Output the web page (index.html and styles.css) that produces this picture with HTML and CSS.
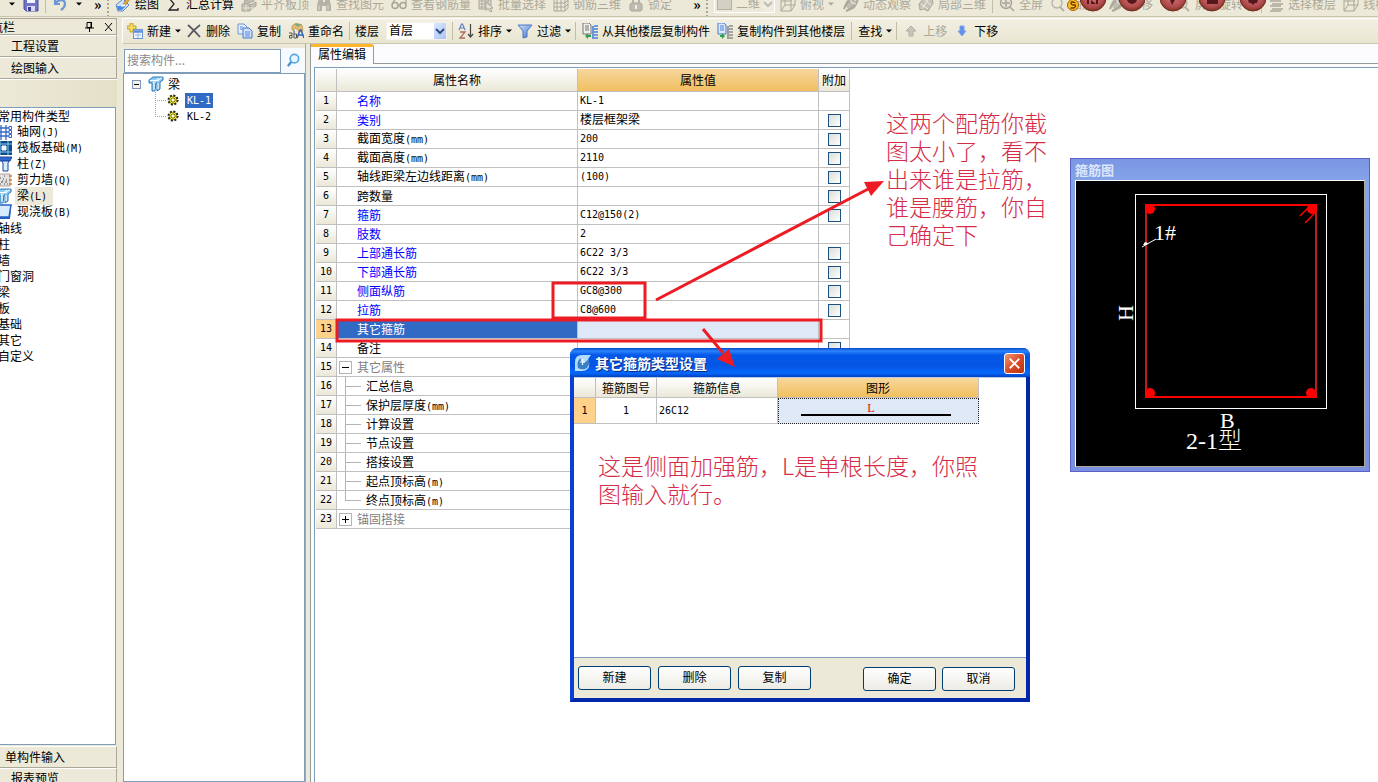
FILE: index.html
```html
<!DOCTYPE html>
<html lang="zh-CN">
<head>
<meta charset="utf-8">
<title>属性编辑</title>
<link rel="stylesheet" href="styles.css">
</head>
<body>
<svg class="defs" aria-hidden="true">
  <defs>
    <linearGradient id="blue" x1="0" y1="0" x2="1" y2="1"><stop offset="0" stop-color="#cfe2ff"/><stop offset="1" stop-color="#3f6fc8"/></linearGradient>
    <radialGradient id="ball" cx=".5" cy=".4" r=".6"><stop offset="0" stop-color="#d98080"/><stop offset=".75" stop-color="#b04a4c"/><stop offset="1" stop-color="#7c3222"/></radialGradient>
    <symbol id="i-save" viewBox="0 0 16 16"><path d="M1 1h14v14H3l-2-2z" fill="#6f74c8" stroke="#4b4f9c"/><path d="M4 1h8v6H4z" fill="#f4f6ff"/><path d="M4 10h8v5H4z" fill="#d8dcf4"/><path d="M5 11h3v4H5z" fill="#3d4190"/></symbol>
    <symbol id="i-undo" viewBox="0 0 16 16"><path d="M3 3v5h5M3.500 7.500C6 3 13 3 13 8c0 3-2 4.500-4 6" fill="none" stroke="#6c96d8" stroke-width="2.200"/></symbol>
    <symbol id="i-draw" viewBox="0 0 16 16"><path d="M1 9l7-6 6 6-6 6H3z" fill="#cfe2fa" stroke="#5c86c4"/><path d="M2 10h9l-4 4H3z" fill="#4c8ae0"/><path d="M8 8L13 1l2 2-5 7z" fill="#e0a838" stroke="#8a6a30" stroke-width=".6"/><path d="M6 11l3-3 2 2z" fill="#fff"/></symbol>
    <symbol id="i-sigma" viewBox="0 0 16 16"><path d="M12 4V2H3l5 6-5 6h9v-2" fill="none" stroke="#222" stroke-width="1.300"/></symbol>
    <symbol id="i-slab" viewBox="0 0 16 16"><path d="M1 8h8v7H1zM3 5l10-3v3L4 8zM9 9l6-3v4l-6 4z" fill="#c4c1b4" stroke="#aaa79a"/><path d="M2 12h12M5 8v7" stroke="#e8e5d8"/></symbol>
    <symbol id="i-bino" viewBox="0 0 16 16"><path d="M3 2h4v4h2V2h4l2 7v6h-5v-5H6v5H1V9z" fill="#b4b1a6"/><path d="M3 9v5M12 9v5" stroke="#dddacf"/></symbol>
    <symbol id="i-glass" viewBox="0 0 16 16"><circle cx="4" cy="9.500" r="3" fill="none" stroke="#aaa79a" stroke-width="1.500"/><circle cx="12" cy="9.500" r="3" fill="none" stroke="#aaa79a" stroke-width="1.500"/><path d="M1 8l4-6M15 8V3l-3-1M7 9h2" fill="none" stroke="#aaa79a" stroke-width="1.300"/></symbol>
    <symbol id="i-batch" viewBox="0 0 16 16"><path d="M1 2h12v11H1zM1 5h12M1 8h12M1 11h12M4 2v11M7 2v11M10 2v11" fill="none" stroke="#aaa79a"/><path d="M8 6l7 6-3 .5 2 3h-2l-2-3-2 2z" fill="#e6e3d6" stroke="#aaa79a"/></symbol>
    <symbol id="i-grid3" viewBox="0 0 16 16"><path d="M1 3l4-2h10v11l-3 3H1zM1 7h11l3-3M1 11h11l3-3M4 3v12M8 2v13M12 3v12M1 3h11l3-2" fill="none" stroke="#aaa79a"/></symbol>
    <symbol id="i-lock" viewBox="0 0 16 16"><path d="M5 8V4q3-4 6 0v4" fill="none" stroke="#aaa79a" stroke-width="1.600"/><rect x="2" y="7" width="12" height="8" rx="2" fill="#bfbcb0" stroke="#aaa79a"/><path d="M8 9v4" stroke="#eee" stroke-width="2"/></symbol>
    <symbol id="i-cube" viewBox="0 0 16 16"><path d="M1 4l4-3h10v8l-4 6H1zM1 5h10v10M11 5l4-4M5 1v8H15M5 9l-4 6" fill="none" stroke="#aaa79a"/></symbol>
    <symbol id="i-orbit" viewBox="0 0 16 16"><circle cx="8" cy="8" r="5.500" fill="#bfbcb0"/><path d="M1 13Q4 3 15 2q-1 9-12 13" fill="none" stroke="#aaa79a" stroke-width="2"/><path d="M7 3l2 4 4 1" stroke="#eee" fill="none"/></symbol>
    <symbol id="i-part" viewBox="0 0 16 16"><path d="M1 8l5-6 4 2 4-2 1 5-5 8-4-2-4 1z" fill="#c8c5b8" stroke="#aaa79a"/><path d="M3 8l7 5M6 3l7 6M10 4l-6 9" stroke="#eeebdf"/></symbol>
    <symbol id="i-full" viewBox="0 0 16 16"><circle cx="7" cy="7" r="5.500" fill="#e6e3d6" stroke="#aaa79a" stroke-width="1.500"/><path d="M11 11l4 4M7 3v8M3 7h8" stroke="#aaa79a" stroke-width="1.500"/></symbol>
    <symbol id="i-zoomg" viewBox="0 0 16 16"><circle cx="7" cy="7" r="5" fill="none" stroke="#b4b1a6" stroke-width="1.300"/><path d="M10 11l4 4" stroke="#b4b1a6" stroke-width="2"/></symbol>
    <symbol id="i-floors" viewBox="0 0 16 16"><path d="M4 3h11M2 5h11M4 8h11M2 10h11M4 13h11M2 15h11" stroke="#aaa79a" stroke-width="1.500"/></symbol>
    <symbol id="i-new" viewBox="0 0 16 16"><path d="M3 0h3v3h3v3H6v3H3V6H0V3h3z" fill="#f8dc60" stroke="#b89020" stroke-width=".8"/><rect x="6.500" y="6.500" width="9" height="9" fill="#eef5ff" stroke="#6c96d0"/><path d="M7 8.500h8" stroke="#5a8ee0" stroke-width="2.500"/><path d="M8 12h6M11 10v5" stroke="#9ab8e4"/></symbol>
    <symbol id="i-del" viewBox="0 0 16 16"><path d="M2 2q6 5 12 12M14 2Q7 7 2 14" fill="none" stroke="#5a5a60" stroke-width="1.800"/></symbol>
    <symbol id="i-copy" viewBox="0 0 16 16"><path d="M1 1h6l3 3v7H1z" fill="#e4efff" stroke="#6c96d8"/><path d="M6 5h6l3 3v7H6z" fill="#cfe0fc" stroke="#4a78c8"/><path d="M8 9h5M8 11h5M8 13h5M3 4h3M3 6h3" stroke="#5a8ad8"/></symbol>
    <symbol id="i-rename" viewBox="0 0 16 16"><path d="M4 3l4-3 6 2 1 6-4 1-3-4-4 2z" fill="#e3bd72" stroke="#a88038" stroke-width=".6"/><path d="M6 1h8l-4 3z" fill="#80a880"/><path d="M9 15l3-8h1l3 8M10 12h5" fill="none" stroke="#3464c0" stroke-width="1.500"/><path d="M1 10h3v5H1.500v-2.500H4M6 7v8M6 11h2.500v4H6" fill="none" stroke="#555"/></symbol>
    <symbol id="i-sort" viewBox="0 0 16 16"><path d="M1 7l2.500-6h1L7 7M2 5h4" fill="none" stroke="#5a82c4" stroke-width="1.200"/><path d="M2 9h5l-5 6h5" fill="none" stroke="#b06a60" stroke-width="1.300"/><path d="M12.500 1v12M10 11l2.500 3 2.500-3" fill="none" stroke="#444" stroke-width="1.200"/></symbol>
    <symbol id="i-funnel" viewBox="0 0 16 16"><path d="M1 2h14l-5 6v6l-4 1V8z" fill="url(#blue)" stroke="#4878c4"/></symbol>
    <symbol id="i-from" viewBox="0 0 16 16"><path d="M1 0h6l2 2v9H1z" fill="#f0f0ee" stroke="#777"/><path d="M3 3h4M3 5h4M3 7h4" stroke="#777"/><path d="M11 3v13M12 3h4M12 6h4M12 9h4M12 12h4M12 15h4" stroke="#4a80d8" stroke-width="1.600"/><path d="M3 13l3-3v2h3v2H6v2z" fill="#30a050"/></symbol>
    <symbol id="i-to" viewBox="0 0 16 16"><path d="M1 0h6l2 2v9H1z" fill="#dce9ff" stroke="#4a78c8"/><path d="M3 3h4M3 5h4M3 7h4" stroke="#4a80d8"/><path d="M11 3v13M12 3h4M12 6h4M12 9h4M12 12h4M12 15h4" stroke="#8c8c90" stroke-width="1.600"/><path d="M8 13l-3-3v2H3v2h2v2z" fill="#30a050"/></symbol>
    <symbol id="i-up" viewBox="0 0 16 16"><path d="M8 3l5 5h-3v5H6V8H3z" fill="#c8c5ba" stroke="#b0ada0"/></symbol>
    <symbol id="i-down" viewBox="0 0 16 16"><path d="M8 13l4-5h-2V3H6v5H4z" fill="#5e90ea" stroke="#7aa2ea"/></symbol>
    <symbol id="i-beam" viewBox="0 0 16 16"><path d="M1 4l4-3h10v3l-3 2v7l-3 2V7H8L7 15H4V7H1z" fill="#8ccaf2" stroke="#2878b8"/><path d="M2 4.500h8l4-3M5 7l6-5M10 7v6M6 7v7" stroke="#fff" fill="none"/></symbol>
    <symbol id="i-gear" viewBox="0 0 12 12"><circle cx="6" cy="6" r="4.500" fill="#e8dc28" stroke="#222" stroke-width="2" stroke-dasharray="2 1.500"/><circle cx="6" cy="6" r="3.300" fill="#f4ec40"/><path d="M6 2v8M2 6h8M3.500 3.500l5 5M8.500 3.500l-5 5" stroke="#555510" stroke-width=".8"/><circle cx="6" cy="6" r="1.200" fill="#fff"/></symbol>
    <symbol id="i-axis" viewBox="0 0 16 16"><path d="M0 4h13M0 8h13M0 12h13M5 1v15M10 1v15" stroke="#3568c8" stroke-width="1.300"/><path d="M13 2.500h2.500v3H13zM13 6.500h2.500v3H13zM13 10.500h2.500v3H13z" fill="#fff" stroke="#3568c8"/></symbol>
    <symbol id="i-raft" viewBox="0 0 16 16"><path d="M0 1h16v14H0z" fill="#0d4c8c"/><path d="M0 4h16M0 12h16M4 1v14M12 1v14" stroke="#8cc8f0"/><path d="M6 6h4v4H6z" fill="#e4f4ff" stroke="#fff"/></symbol>
    <symbol id="i-col" viewBox="0 0 16 16"><path d="M0 3l2-2h14l-2 4H0z" fill="#2e66cc" stroke="#1a48a0"/><path d="M6 5h7l-1 2v8H7V7z" fill="#d8ecff" stroke="#1a48a0"/></symbol>
    <symbol id="i-wall" viewBox="0 0 16 16"><path d="M0 2h14v12H0z" fill="#e2e2e2" stroke="#b8a090"/><path d="M4 6h1M8 4h1M6 9h1M10 8h1M8 12h1M4 12h1M11 12h1M7 7h1M5 10h2M9 10h2" stroke="#555"/><path d="M13 4h3M13 8h3M13 12h3" stroke="#d87828" stroke-width="1.500"/></symbol>
    <symbol id="i-plate" viewBox="0 0 16 16"><path d="M2 1h13l-2 12H0z" fill="#d8ecff" stroke="#2460c4" stroke-width="1.500"/><path d="M0 13h13l2-12v3l-1 11H0z" fill="#2460c4"/></symbol>
  </defs>
</svg>

<header class="toolbar toolbar-top">
  <div class="tools tools-file">
    <i class="arrow"></i>
    <button class="tool" aria-label="保存"><svg class="icon"><use href="#i-save"/></svg></button>
    <i class="sep"></i>
    <button class="tool" aria-label="撤销"><svg class="icon"><use href="#i-undo"/></svg></button>
    <i class="arrow"></i><span class="more">»</span>
  </div>
  <i class="grip"></i>
  <div class="tools tools-draw">
    <button class="tool"><svg class="icon"><use href="#i-draw"/></svg>绘图</button>
    <button class="tool"><svg class="icon"><use href="#i-sigma"/></svg>汇总计算</button>
    <button class="tool" disabled><svg class="icon"><use href="#i-slab"/></svg>平齐板顶</button>
    <button class="tool" disabled><svg class="icon"><use href="#i-bino"/></svg>查找图元</button>
    <button class="tool" disabled><svg class="icon"><use href="#i-glass"/></svg>查看钢筋量</button>
    <button class="tool" disabled><svg class="icon"><use href="#i-batch"/></svg>批量选择</button>
    <button class="tool" disabled><svg class="icon"><use href="#i-grid3"/></svg>钢筋三维</button>
    <button class="tool" disabled><svg class="icon"><use href="#i-lock"/></svg>锁定</button>
    <span class="more">»</span>
  </div>
  <i class="grip"></i>
  <div class="tools tools-view">
    <span class="combo combo-view"><select disabled aria-label="视图"><option>二维</option></select><i class="swatch"></i><svg viewBox="0 0 12 16"><path d="M2 6l4 4 4-4" /></svg></span>
    <button class="tool spaced" disabled><svg class="icon"><use href="#i-cube"/></svg>俯视<i class="arrow"></i></button>
    <button class="tool" disabled><svg class="icon"><use href="#i-orbit"/></svg>动态观察</button>
    <button class="tool" disabled><svg class="icon"><use href="#i-part"/></svg>局部三维</button>
    <i class="sep"></i>
    <button class="tool" disabled><svg class="icon"><use href="#i-full"/></svg>全屏</button>
    <button class="tool" disabled><svg class="icon"><use href="#i-zoomg"/></svg>缩放<i class="arrow"></i></button>
    <button class="tool" disabled><svg class="icon"><use href="#i-orbit"/></svg>平移</button>
    <i class="arrow"></i>
    <button class="tool spaced" disabled><svg class="icon"><use href="#i-zoomg"/></svg>屏幕旋转<i class="arrow"></i></button>
    <i class="sep"></i>
    <button class="tool" disabled><svg class="icon"><use href="#i-floors"/></svg>选择楼层</button>
    <button class="tool" disabled><svg class="icon"><use href="#i-cube"/></svg>线框</button>
  </div>
  <svg class="balls" viewBox="0 0 210 18" aria-hidden="true">
    <g fill="url(#ball)" stroke="#70301c"><circle cx="31" cy="-2" r="13"/><circle cx="70" cy="-2" r="13"/><circle cx="111" cy="-2" r="13"/><circle cx="150" cy="-2" r="13"/><circle cx="191" cy="-2" r="13"/></g>
    <g fill="#54171c"><path d="M25 0h2v4h-2zM29 4V0l5 4V0h2v4"/><circle cx="70" cy="-1" r="5"/><path d="M108 0h5l-3 5z"/><path d="M145 0h11v4h-11z"/><path d="M186 0h10l-1 3h-2l-2 2-2-2h-2z"/></g>
    <circle cx="11" cy="5" r="5.500" fill="#ffc51c" stroke="#a85a08"/><path d="M13.500 3q-4-2-4.500 0t3 2 0 3H8.500" fill="none" stroke="#6a3000" stroke-width="1.300"/>
  </svg>
</header>

<div class="workspace">
  <aside class="nav">
    <div class="nav-title"><span>模块导航栏</span>
      <svg viewBox="0 0 9 10"><path d="M2 .5h4v5H2zM6.500 0v6M0 6h9M4.500 6v4" fill="none" stroke="#000"/></svg>
      <svg viewBox="0 0 9 10"><path d="M1 1l7 8M8 1L1 9" fill="none" stroke="#000"/></svg>
    </div>
    <button class="nav-tab">工程设置</button>
    <button class="nav-tab">绘图输入</button>
    <div class="nav-strip"></div>
    <ul class="nav-list">
      <li class="group">常用构件类型</li>
      <li><svg class="icon"><use href="#i-axis"/></svg><span>轴网<b>(J)</b></span></li>
      <li><svg class="icon"><use href="#i-raft"/></svg><span>筏板基础<b>(M)</b></span></li>
      <li><svg class="icon"><use href="#i-col"/></svg><span>柱<b>(Z)</b></span></li>
      <li><svg class="icon"><use href="#i-wall"/></svg><span>剪力墙<b>(Q)</b></span></li>
      <li class="current"><svg class="icon"><use href="#i-beam"/></svg><span>梁<b>(L)</b></span></li>
      <li><svg class="icon"><use href="#i-plate"/></svg><span>现浇板<b>(B)</b></span></li>
      <li class="group">轴线</li><li class="group">柱</li><li class="group">墙</li><li class="group">门窗洞</li><li class="group">梁</li><li class="group">板</li><li class="group">基础</li><li class="group">其它</li><li class="group">自定义</li>
    </ul>
    <button class="nav-tab nav-single">单构件输入</button>
    <button class="nav-tab nav-last">报表预览</button>
  </aside>

  <main class="main">
    <div class="toolbar toolbar-edit tools">
      <button class="tool"><svg class="icon"><use href="#i-new"/></svg>新建<i class="arrow"></i></button>
      <button class="tool"><svg class="icon"><use href="#i-del"/></svg>删除</button>
      <button class="tool"><svg class="icon"><use href="#i-copy"/></svg>复制</button>
      <button class="tool"><svg class="icon"><use href="#i-rename"/></svg>重命名</button>
      <i class="sep tight"></i>
      <label for="floor">楼层</label>
      <span class="combo"><select id="floor"><option>首层</option></select><svg viewBox="0 0 12 16"><path d="M2 6l4 4 4-4"/></svg></span>
      <i class="sep tight"></i>
      <button class="tool"><svg class="icon"><use href="#i-sort"/></svg>排序<i class="arrow"></i></button>
      <button class="tool"><svg class="icon"><use href="#i-funnel"/></svg>过滤<i class="arrow"></i></button>
      <i class="sep"></i>
      <button class="tool"><svg class="icon"><use href="#i-from"/></svg>从其他楼层复制构件</button>
      <button class="tool"><svg class="icon"><use href="#i-to"/></svg>复制构件到其他楼层</button>
      <i class="sep"></i>
      <button class="tool">查找<i class="arrow"></i></button>
      <i class="sep"></i>
      <button class="tool" disabled><svg class="icon"><use href="#i-up"/></svg>上移</button>
      <button class="tool"><svg class="icon"><use href="#i-down"/></svg>下移</button>
    </div>
    <div class="content">
      <section class="components">
        <div class="search"><input type="text" placeholder="搜索构件..." aria-label="搜索构件"><button aria-label="搜索"><svg viewBox="0 0 16 16"><circle cx="9" cy="6" r="4.500" fill="#e8f6ff" stroke="#5aa8e0" stroke-width="1.800"/><path d="M5.500 9.500L2 14" stroke="#4a90cc" stroke-width="2.500"/></svg></button></div>
        <div class="tree">
          <div class="branch"><i class="fold"></i><svg class="icon"><use href="#i-beam"/></svg>梁</div>
          <div class="leaf"><svg class="gear"><use href="#i-gear"/></svg><span class="selected">KL-1</span></div>
          <div class="leaf"><svg class="gear"><use href="#i-gear"/></svg><span>KL-2</span></div>
        </div>
      </section>
      <section class="props">
        <div class="tabs"><button class="tab">属性编辑</button></div>
        <div class="sheet">
          <table class="grid prop-grid">
            <colgroup><col class="c-num"><col class="c-name"><col class="c-value"><col class="c-add"></colgroup>
            <thead><tr><th></th><th>属性名称</th><th class="hot">属性值</th><th>附加</th></tr></thead>
            <tbody>
              <tr><th>1</th><td class="name link">名称</td><td class="val">KL-1</td><td></td></tr>
              <tr><th>2</th><td class="name link">类别</td><td class="val zh">楼层框架梁</td><td><input type="checkbox" aria-label="类别附加"></td></tr>
              <tr><th>3</th><td class="name">截面宽度<b>(mm)</b></td><td class="val">200</td><td><input type="checkbox" aria-label="截面宽度附加"></td></tr>
              <tr><th>4</th><td class="name">截面高度<b>(mm)</b></td><td class="val">2110</td><td><input type="checkbox" aria-label="截面高度附加"></td></tr>
              <tr><th>5</th><td class="name">轴线距梁左边线距离<b>(mm)</b></td><td class="val">(100)</td><td><input type="checkbox" aria-label="距离附加"></td></tr>
              <tr><th>6</th><td class="name">跨数量</td><td class="val"></td><td><input type="checkbox" aria-label="跨数量附加"></td></tr>
              <tr><th>7</th><td class="name link">箍筋</td><td class="val">C12@150(2)</td><td><input type="checkbox" aria-label="箍筋附加"></td></tr>
              <tr><th>8</th><td class="name link">肢数</td><td class="val">2</td><td></td></tr>
              <tr><th>9</th><td class="name link">上部通长筋</td><td class="val">6C22 3/3</td><td><input type="checkbox" aria-label="上部通长筋附加"></td></tr>
              <tr><th>10</th><td class="name link">下部通长筋</td><td class="val">6C22 3/3</td><td><input type="checkbox" aria-label="下部通长筋附加"></td></tr>
              <tr><th>11</th><td class="name link">侧面纵筋</td><td class="val">GC8@300</td><td><input type="checkbox" aria-label="侧面纵筋附加"></td></tr>
              <tr><th>12</th><td class="name link">拉筋</td><td class="val">C8@600</td><td><input type="checkbox" aria-label="拉筋附加"></td></tr>
              <tr class="active"><th>13</th><td class="name">其它箍筋</td><td class="val"></td><td></td></tr>
              <tr><th>14</th><td class="name">备注</td><td class="val"></td><td><input type="checkbox" aria-label="备注附加"></td></tr>
              <tr><th>15</th><td class="name head"><div><button class="toggle" aria-label="收起"></button>其它属性</div></td><td></td><td></td></tr>
              <tr><th>16</th><td class="name sub"><div>汇总信息</div></td><td></td><td></td></tr>
              <tr><th>17</th><td class="name sub"><div>保护层厚度<b>(mm)</b></div></td><td></td><td></td></tr>
              <tr><th>18</th><td class="name sub"><div>计算设置</div></td><td></td><td></td></tr>
              <tr><th>19</th><td class="name sub"><div>节点设置</div></td><td></td><td></td></tr>
              <tr><th>20</th><td class="name sub"><div>搭接设置</div></td><td></td><td></td></tr>
              <tr><th>21</th><td class="name sub"><div>起点顶标高<b>(m)</b></div></td><td></td><td></td></tr>
              <tr><th>22</th><td class="name sub end"><div>终点顶标高<b>(m)</b></div></td><td></td><td></td></tr>
              <tr><th>23</th><td class="name head"><div><button class="toggle plus" aria-label="展开"></button>锚固搭接</div></td><td></td><td></td></tr>
            </tbody>
          </table>
        </div>
      </section>
    </div>
  </main>
</div>

<section class="dialog" role="dialog" aria-label="其它箍筋类型设置">
  <div class="dialog-title">
    <svg class="logo" viewBox="0 0 16 16"><path d="M0 16V7q0-7 7-7h9L13 4q2 4 1 8-2 4-7 4z" fill="#b4dcfa"/><path d="M3 13Q1 6 6 3q-1 4 3 5l5-4q1 8-4 10-4 1-7-1z" fill="#3a80c8"/><path d="M5 7h5M7.500 4v6" stroke="#f0faff" fill="none" stroke-width="1.200"/></svg>
    <h2>其它箍筋类型设置</h2>
    <button class="close" aria-label="关闭"><svg viewBox="0 0 20 20"><path d="M5 5l10 10M15 5L5 15"/></svg></button>
  </div>
  <div class="dialog-body">
    <table class="grid stirrup-grid">
      <colgroup><col class="s-num"><col class="s-id"><col class="s-info"><col class="s-shape"></colgroup>
      <thead><tr><th></th><th>箍筋图号</th><th>箍筋信息</th><th class="hot">图形</th></tr></thead>
      <tbody><tr class="active"><th>1</th><td class="mid">1</td><td class="val">26C12</td><td class="shape"><div>L</div></td></tr></tbody>
    </table>
    <p class="note note-inner">这是侧面加强筋，L是单根长度，你照图输入就行。</p>
  </div>
  <div class="dialog-foot">
    <button>新建</button><button>删除</button><button>复制</button>
    <div class="confirm"><button>确定</button><button>取消</button></div>
  </div>
</section>

<p class="note note-outer">这两个配筋你截图太小了，看不出来谁是拉筋，谁是腰筋，你自己确定下</p>

<section class="preview">
  <h2>箍筋图</h2>
  <svg viewBox="1076 181 288 285">
    <rect x="1135.500" y="194.500" width="191" height="214" fill="none" stroke="#fff"/>
    <path d="M1146 205v192M1316 205v192" stroke="#c01c1c" stroke-width="2"/>
    <path d="M1145 205h172M1145 397h172" stroke="#f00" stroke-width="2"/>
    <g fill="#f00"><circle cx="1150" cy="209" r="5"/><circle cx="1312" cy="209" r="5"/><circle cx="1150" cy="393" r="5"/><circle cx="1311" cy="393" r="5"/></g>
    <path d="M1300 216l9-9M1305 223l10-10" stroke="#f00" stroke-width="1.500"/>
    <path d="M1142 247l14-8" stroke="#fff"/><path d="M1143 245l2-3 3 1-1 2z" fill="#fff"/>
    <g fill="#fff" class="cad"><text x="1154" y="240">1#</text><text x="1220" y="428">B</text><text x="1186" y="449" class="cad-name">2-1型</text><text transform="translate(1133 321) rotate(-90)">H</text></g>
  </svg>
</section>

<svg class="marks" aria-hidden="true">
  <g fill="none" stroke="#ed1c24" stroke-width="3"><rect x="553" y="283" width="92" height="35"/><rect x="337" y="320" width="484" height="21"/><path d="M656 300L872 187M703 329L723 353"/></g>
  <path d="M884 181l-13 15-7-14zM735 367l-18-8 12-10z" fill="#ed1c24"/>
</svg>
</body>
</html>
```

FILE: styles.css
```css
* { box-sizing: border-box; }
body {
  margin: 0; height: 100vh; overflow: hidden; position: relative;
  display: flex; flex-direction: column;
  background: #ece9d8; color: #000;
  font: 12px/16px "Noto Sans CJK SC", sans-serif;
}
button, input, select { font: inherit; color: inherit; }
button { border: 0; background: none; padding: 0; white-space: nowrap; }
h2, p, ul { margin: 0; padding: 0; }
b, .val, .mid, .leaf span, tbody th { font-family: "DejaVu Sans Mono", "Noto Sans CJK SC", monospace; font-size: 10px; font-weight: 400; }
.defs { position: absolute; width: 0; height: 0; }
.icon { width: 16px; height: 16px; flex: none; }

/* toolbars */
.toolbar { background: linear-gradient(#f2f0e4, #e8e5d0); }
.toolbar-top { position: relative; height: 17px; flex: none; display: flex; overflow: hidden; border-bottom: 1px solid #c9c5ae; background: #ece9d8; }
.toolbar-top .tools, .toolbar-top .grip { margin-top: -9px; height: 26px; flex: none; }
.tools { display: flex; align-items: center; gap: 7px; }
.tools-file { width: 107px; padding-left: 8px; }
.tools-draw { width: 597px; padding-left: 6px; }
.tools-draw .more { margin-left: 14px; }
.tools-view { padding-left: 6px; }
.grip { width: 2px; border-left: 2px dotted #a8a592; }
.tool { display: flex; align-items: center; gap: 4px; flex: none; }
.tool:disabled { color: #aca899; }
.spaced { margin-right: 4px; }
.arrow { border: 4px solid transparent; border-top-color: currentColor; border-bottom: 0; transform: scale(.75); flex: none; width: 8px; height: 4px; }
.tool .arrow { margin-left: -4px; transform: translateX(3px) scale(.75); }
.more { font-size: 14px; font-weight: 700; margin-left: 4px; }
.sep { width: 1px; height: 18px; margin: 0 -1px; background: #c2bea6; flex: none; }
.tight { margin: 0 -2px; }
.combo { position: relative; width: 61px; height: 18px; flex: none; }
.combo select { appearance: none; width: 100%; height: 18px; border: 1px solid #f4f2e8; background: #fff; padding: 0 0 2px 2px; border-radius: 0; outline: 0; line-height: 14px; display: block; }
.combo svg { position: absolute; right: 1px; top: 1px; width: 12px; height: 16px; background: linear-gradient(135deg, #dce8ff, #aac4f4); fill: none; stroke: #354c80; stroke-width: 2; pointer-events: none; }
.combo-view { margin-right: -2px; }
.combo-view select { background: #ece9d8; border-color: #fff; padding-left: 21px; color: #aca899; opacity: 1; }
.combo-view svg { background: #eeece0; stroke: #c0bdb0; }
.swatch { position: absolute; left: 3px; top: 2px; width: 15px; height: 13px; background: #d4d1c4; border: 1px solid #b4b1a6; }
.balls { position: absolute; left: 1062px; top: 0; width: 210px; height: 18px; }
.toolbar-edit { height: 26px; flex: none; padding: 0 4px 1px 4px; border-top: 1px solid #fff; border-bottom: 1px solid #c9c5ae; border-left: 1px solid #fff; margin-top: 1px; }

.workspace { flex: 1; min-height: 0; display: flex; gap: 5px; }
.main { flex: 1; min-width: 0; display: flex; flex-direction: column; }
.content { flex: 1; min-height: 0; display: flex; gap: 4px; }

/* left navigation */
.nav { width: 117px; flex: none; display: flex; flex-direction: column; overflow: hidden; padding-top: 1px; }
.nav-title { height: 17px; flex: none; border: 1px solid #aca899; border-left: 0; display: flex; align-items: center; gap: 10px; padding-right: 3px; }
.nav-title span { margin: 0 auto 0 -45px; }
.nav-title svg { width: 9px; height: 10px; }
.nav-tab { height: 22px; flex: none; text-align: left; padding-left: 11px; border-top: 1px solid #fff; border-bottom: 1px solid #aca899; border-right: 1px solid #aca899; }
.nav-strip { height: 28px; flex: none; border-top: 1px solid #fff; background: linear-gradient(90deg, #ece9d8, #e4e0c8); }
.nav-list { flex: 1; min-height: 0; list-style: none; background: #fff; border: 1px solid #7f9db9; border-left: 0; margin-right: 1px; }
.nav-list li { height: 16px; display: flex; align-items: center; }
.nav-list .icon { margin-left: -4px; margin-right: 3px; }
.nav-list span { padding: 0 6px 0 2px; }
.nav-list .group { margin-left: -2px; }
.current span { background: #ece9d8; }
.nav-single { padding-left: 5px; margin-top: 1px; }
.nav-last { height: 14px; line-height: 18px; overflow: hidden; border-bottom: 0; }

/* component tree */
.components { width: 184px; flex: none; display: flex; flex-direction: column; padding-top: 4px; border-right: 1px solid #aca899; }
.search { height: 25px; display: flex; padding-left: 2px; }
.search input { width: 157px; height: 24px; border: 1px solid #7f9db9; padding: 0 2px 4px; background: #fff; border-radius: 0; outline: 0; margin-top: 1px; }
.search input::placeholder { color: #8a8a8a; }
.search button { flex: 1; background: #f6f9fd; display: grid; place-items: center; }
.search button svg { width: 15px; height: 15px; }
.tree { flex: 1; background: #fff; border: 1px solid #7f9db9; margin-left: 1px; padding: 2px 0 0 8px; }
.branch { height: 16px; display: flex; align-items: center; gap: 4px; }
.branch .icon { margin-left: 3px; }
.fold { width: 9px; height: 9px; border: 1px solid #8094b4; background: linear-gradient(#000, #000) center / 5px 1px no-repeat #f4f2ea; }
.leaf { height: 16px; display: flex; align-items: center; margin-left: 23px; padding-left: 12px; background: repeating-linear-gradient(90deg, #a8a592 0 1px, transparent 1px 2px) 0 8px / 12px 1px no-repeat, repeating-linear-gradient(#a8a592 0 1px, transparent 1px 2px) 0 0 / 1px 16px no-repeat; }
.leaf:last-child { background-size: 12px 1px, 1px 8px; }
.gear { width: 12px; height: 12px; margin-right: 6px; }
.leaf span { padding: 0 2px; line-height: 15px; }
.leaf .selected { background: #316ac5; color: #fff; }

/* property sheet */
.props { flex: 1; min-width: 0; display: flex; flex-direction: column; border-left: 1px solid #919b9c; background: #fcfcfe; }
.tabs { height: 20px; flex: none; display: flex; }
.tabs::after { content: ""; flex: 1; border-bottom: 1px solid #919b9c; }
.tab { width: 63px; border-top: 3px solid #ffb52c; border-right: 1px solid #919b9c; border-radius: 0 3px 0 0; line-height: 14px; align-self: stretch; padding-bottom: 3px; }
.sheet { flex: 1; margin: 3px 0 0 3px; border: 1px solid #7f9db9; border-right: 0; border-bottom: 0; background: #fff; padding: 1px; }
.grid { border-collapse: separate; border-spacing: 0; table-layout: fixed; }
.grid th, .grid td { border-right: 1px solid #c0c0c0; border-bottom: 1px solid #c0c0c0; padding: 0; height: 19px; line-height: 16px; font-weight: 400; overflow: hidden; white-space: nowrap; }
.grid th { background: linear-gradient(#fff, #ebe8d8); text-align: center; }
.grid thead .hot { background: linear-gradient(#f8d79c, #f0bf60); }
.grid .active th { background: #ffd28c; }
.prop-grid { width: 534px; }
.prop-grid thead th { height: 23px; }
.c-num { width: 21px; } .c-name, .c-value { width: 241px; } .c-add { width: 31px; }
.grid td.name { padding-left: 20px; }
.grid td.val { padding-left: 2px; }
.grid td.zh { font-size: 12px; }
.link { color: #00f; }
.prop-grid td:last-child { text-align: center; }
.grid input { appearance: none; width: 13px; height: 13px; border: 1px solid #1c5180; background: linear-gradient(135deg, #dcdcd7, #fff); margin: 2px 0 0; display: inline-block; vertical-align: top; }
.active .name { background: #316ac5; color: #fff; }
.active .name + .val { background: #dfe8f6; }
.grid td.head, .grid td.sub { padding: 0; color: #808080; }
.head div { display: flex; align-items: center; gap: 5px; padding-left: 2px; }
.toggle { width: 13px; height: 13px; border: 1px solid #b4b4b4; background: linear-gradient(#000, #000) center / 7px 1px no-repeat #fff; }
.toggle.plus { background: linear-gradient(#000, #000) center / 7px 1px no-repeat, linear-gradient(#000, #000) center / 1px 7px no-repeat #fff; }
.grid td.sub { color: #000; }
.sub div { height: 18px; line-height: 18px; margin-left: 8px; padding-left: 21px; background: linear-gradient(#b4b4b4, #b4b4b4) 0 9px / 16px 1px no-repeat, linear-gradient(#b4b4b4, #b4b4b4) 0 0 / 1px 18px no-repeat; }
.end div { background-size: 16px 1px, 1px 9px; }

/* dialog window */
.dialog { position: absolute; left: 570px; top: 348px; width: 460px; height: 354px; display: flex; flex-direction: column; border: 4px solid #0a3fd6; border-top: 0; border-right-color: #0426a8; border-bottom-color: #0426a8; border-radius: 7px 7px 0 0; background: #ece9d8; }
.dialog-title { height: 29px; flex: none; margin: 0 -4px; padding: 0 5px; display: flex; align-items: center; gap: 4px; border-radius: 7px 7px 0 0; background: linear-gradient(#0848c8, #2c84fc 3px, #0458e8 7px, #0455e4 18px, #0568fc 25px, #0440c0); }
.logo { width: 16px; height: 16px; }
.dialog-title h2 { font-size: 14px; line-height: 18px; font-weight: 700; color: #fff; text-shadow: 1px 1px #0a2c80; margin-right: auto; }
.close { width: 21px; height: 21px; border: 1px solid #fff; border-radius: 3px; background: linear-gradient(135deg, #f09878, #dc4c28 50%, #b83008); margin-top: 2px; }
.close svg { width: 19px; height: 19px; display: block; stroke: #fff; stroke-width: 2; }
.dialog-body { flex: 1; background: #fff; border-bottom: 1px solid #7f9db9; border-top: 1px solid #b8cce8; }
.stirrup-grid { width: 405px; }
.stirrup-grid thead th { height: 20px; }
.stirrup-grid tbody th, .stirrup-grid tbody td { height: 26px; }
.s-num { width: 22px; } .s-id { width: 61px; } .s-info { width: 121px; } .s-shape { width: 201px; }
.mid { text-align: center; }
.grid td.shape { background: #dfe8f6; border: 1px dotted #222; vertical-align: top; }
.shape div { width: 150px; height: 17px; margin: 0 0 0 22px; border-bottom: 2px solid #000; color: #f00000; text-align: center; font: 12px/18px "Liberation Serif", serif; padding-right: 10px; }
.note { color: #d62c48; font-size: 23px; line-height: 28px; font-weight: 300; }
.note-inner { margin: 27px 40px 0 24px; }
.note-outer { position: absolute; left: 886px; top: 108px; width: 168px; }
.dialog-foot { height: 40px; flex: none; display: flex; align-items: center; gap: 7px; padding: 0 11px 0 4px; }
.dialog-foot button { width: 73px; height: 24px; border: 1px solid #003c74; border-radius: 3px; background: linear-gradient(#fff, #ecebe4); padding-bottom: 2px; }
.confirm { margin-left: auto; padding-top: 2px; display: flex; gap: 6px; }

/* stirrup preview window */
.preview { position: absolute; left: 1070px; top: 158px; width: 300px; height: 314px; display: flex; flex-direction: column; padding: 0 4px 4px; background: linear-gradient(#7b96e4, #84a4e8 22px, #7a8fe0); border: 1px solid #5a62c8; }
.preview h2 { font-size: 13px; line-height: 22px; font-weight: 700; color: #dce6fa; height: 21px; flex: none; }
.preview svg { display: block; width: 100%; flex: 1; min-height: 0; background: #000; border: 1px solid #fff; border-right-color: #aca899; border-bottom-color: #aca899; }
.cad { font: 22px "Liberation Serif", "Noto Sans CJK SC", serif; font-weight: 300; }
.cad-name { font-size: 24px; }
.marks { position: absolute; inset: 0; width: 100%; height: 100%; pointer-events: none; }
```
